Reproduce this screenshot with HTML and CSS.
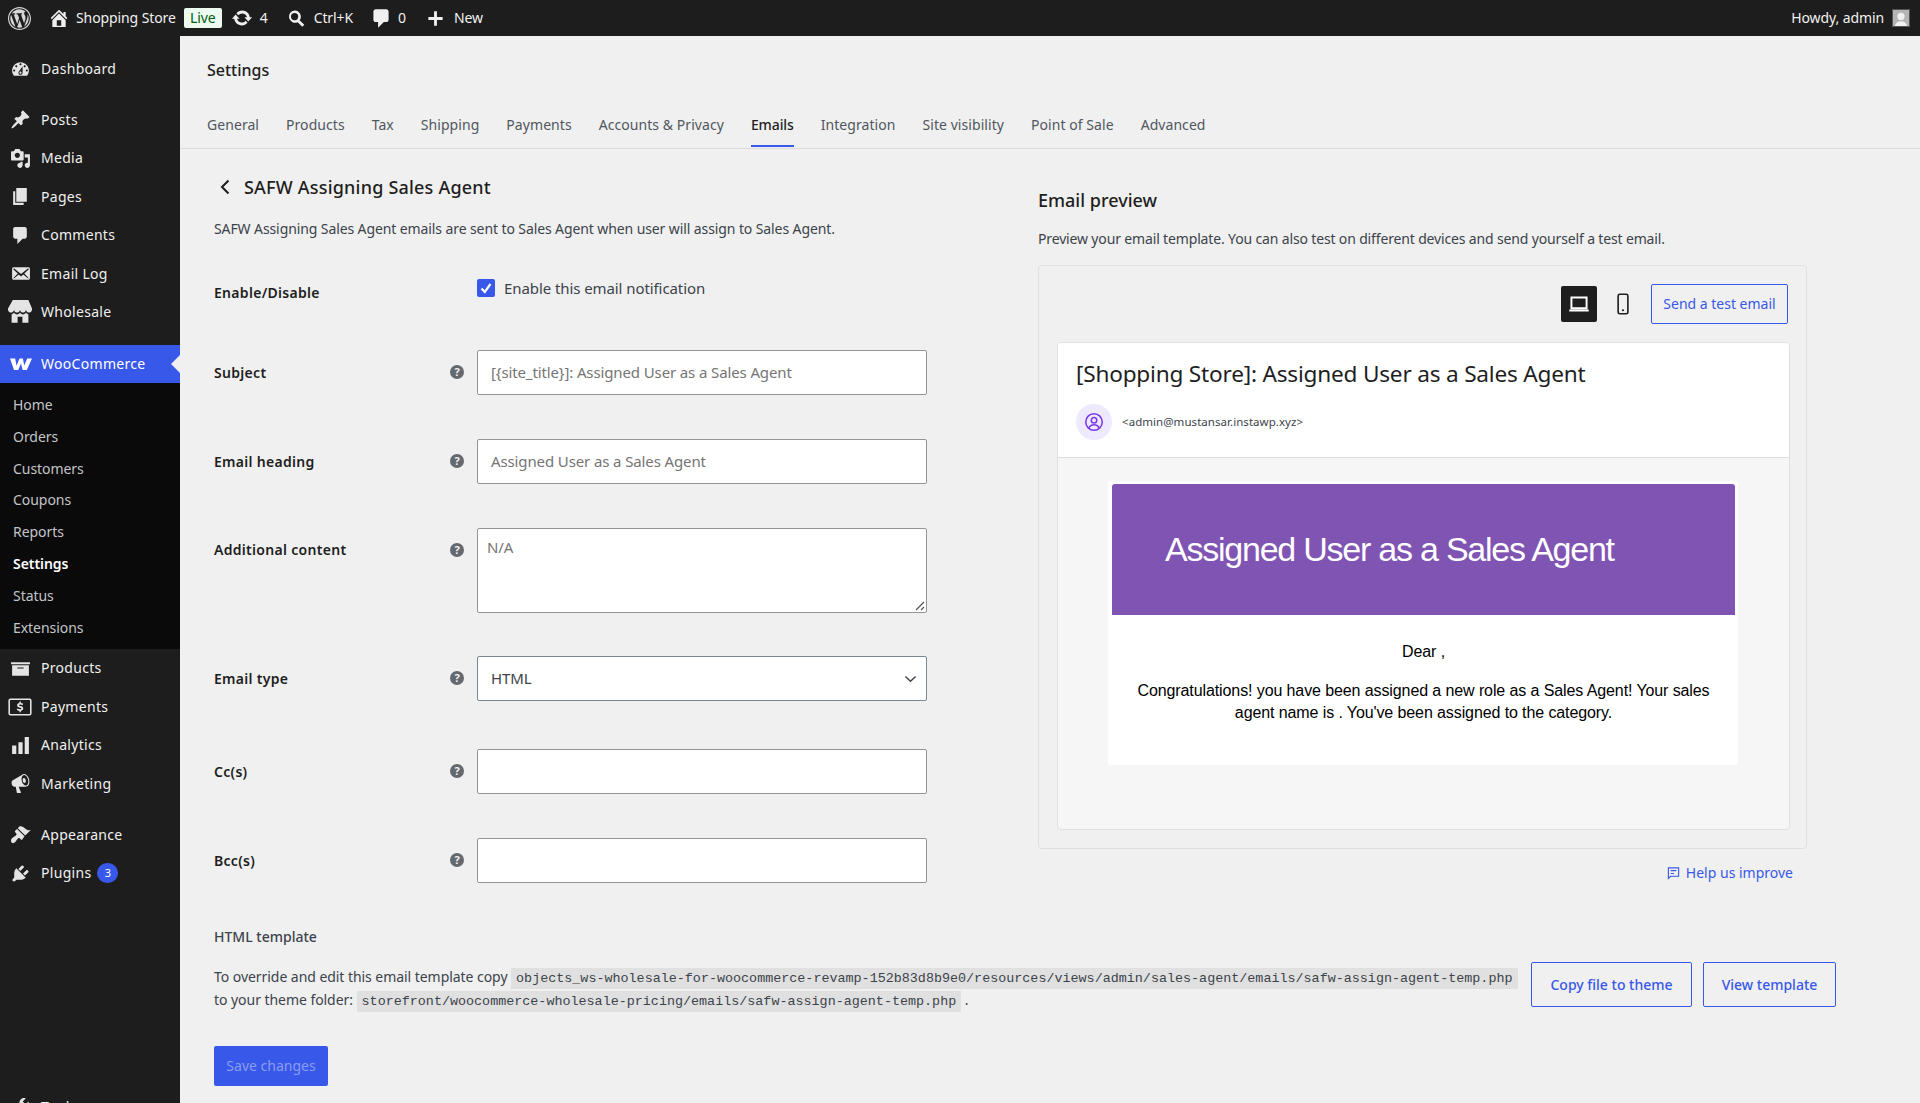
FILE: index.html
```html
<!DOCTYPE html>
<html lang="en">
<head>
<meta charset="utf-8">
<title>Settings</title>
<link rel="stylesheet" href="styles.css">
</head>
<body>
<header class="adminbar">
  <svg class="bar-logo" viewBox="0 0 20 20"><path d="M20 10c0-5.52-4.48-10-10-10S0 4.48 0 10s4.48 10 10 10 10-4.48 10-10zM10 1.01c4.96 0 8.99 4.03 8.99 8.99s-4.03 8.99-8.99 8.99S1.01 14.96 1.01 10 5.04 1.01 10 1.01zM8.01 14.82L4.96 6.61c.49-.03 1.05-.08 1.05-.08.43-.05.38-1.01-.06-.99 0 0-1.29.1-2.13.1-.15 0-.33 0-.52-.01 1.44-2.17 3.9-3.6 6.7-3.6 2.09 0 3.99.79 5.41 2.09-.6-.08-1.45.35-1.45 1.42 0 .66.38 1.22.79 1.88.31.54.5 1.22.5 2.21 0 1.34-1.27 4.48-1.27 4.48l-2.71-7.5c.48-.03.75-.16.75-.16.43-.05.38-1.1-.05-1.08 0 0-1.3.11-2.14.11-.78 0-2.11-.11-2.11-.11-.43-.02-.48 1.06-.05 1.08l.84.08 1.12 3.04zm6.02 2.15L16.64 10s.67-1.69.39-3.81c.63 1.14.94 2.42.94 3.81 0 2.96-1.56 5.58-3.94 6.97zM2.68 6.77L6.5 17.25c-2.67-1.3-4.47-4.08-4.47-7.25 0-1.16.2-2.23.65-3.23zm7.45 4.53l2.29 6.25c-.75.27-1.57.42-2.42.42-.72 0-1.41-.11-2.06-.3z"/></svg>
  <div class="bar-item bar-home">
    <svg class="bar-ic" viewBox="1 1 18 18"><path d="M16 8.5l1.53 1.53-1.06 1.06L10 4.62l-6.47 6.47-1.06-1.06L10 2.5l4 4v-2h2v4zm-6-2.46l6 5.99V18H4v-5.97zM12 17v-5H8v5h4z"/></svg>
    <span>Shopping Store</span>
    <span class="live">Live</span>
  </div>
  <div class="bar-item bar-updates">
    <svg class="bar-ic bar-ic-lg" viewBox="0 0 20 20"><path d="M10.2 3.28c3.53 0 6.43 2.61 6.92 6h2.08l-3.5 4-3.5-4h2.32c-.45-1.97-2.21-3.45-4.32-3.45-1.45 0-2.73.71-3.54 1.78L4.95 5.66C6.23 4.2 8.11 3.28 10.2 3.28zm-.4 13.44c-3.52 0-6.43-2.61-6.92-6H.8l3.5-4c1.17 1.33 2.33 2.67 3.5 4H5.48c.45 1.97 2.21 3.45 4.32 3.45 1.45 0 2.73-.71 3.54-1.78l1.71 1.95c-1.28 1.46-3.15 2.38-5.25 2.38z"/></svg>
    <span>4</span>
  </div>
  <div class="bar-item bar-search">
    <svg class="bar-ic" viewBox="0 0 20 20"><path d="M8 1.500a6.500 6.500 0 0 1 5.300 10.300l4.900 4.900-2.100 2.100-4.900-4.900A6.500 6.500 0 1 1 8 1.500zm0 2.700a3.800 3.800 0 1 0 0 7.600 3.800 3.800 0 0 0 0-7.600z"/></svg>
    <span>Ctrl+K</span>
  </div>
  <div class="bar-item bar-comments">
    <svg class="bar-ic" viewBox="2 1 15 18"><path d="M5 2h9c1.100 0 2 .9 2 2v7c0 1.100-.9 2-2 2h-2l-5 5v-5H5c-1.100 0-2-.9-2-2V4c0-1.100.9-2 2-2z"/></svg>
    <span>0</span>
  </div>
  <div class="bar-item bar-new">
    <svg class="bar-ic" viewBox="0 0 20 20"><path d="M17.500 8.300v3.400h-6v6H8.500v-6h-6V8.300h6v-6h3v6h6z"/></svg>
    <span>New</span>
  </div>
  <div class="bar-item bar-user">
    <span>Howdy, admin</span>
    <svg class="avatar" viewBox="0 0 20 20"><rect width="20" height="20" fill="#b4b4b4"/><circle cx="10" cy="8" r="4.500" fill="#f0f0f0"/><path d="M2.500 20c.5-4 3.500-6 7.500-6s7 2 7.500 6z" fill="#f0f0f0"/></svg>
  </div>
</header>

<div class="shell">
  <nav class="sidebar">
    <a class="menu-item first"><svg class="menu-ic" viewBox="0 0 20 20"><path d="M3.760 16h12.480c1.100-1.370 1.760-3.110 1.760-5 0-4.420-3.580-8-8-8s-8 3.580-8 8c0 1.890.66 3.630 1.760 5zM10 4c.55 0 1 .45 1 1s-.45 1-1 1-1-.45-1-1 .45-1 1-1zM6 6c.55 0 1 .45 1 1s-.45 1-1 1-1-.45-1-1 .45-1 1-1zm8 0c.55 0 1 .45 1 1s-.45 1-1 1-1-.45-1-1 .45-1 1-1zm-5.370 5.550L12 7v6c0 1.100-.9 2-2 2s-2-.9-2-2c0-.57.24-1.080.63-1.450zM4 10c.55 0 1 .45 1 1s-.45 1-1 1-1-.45-1-1 .45-1 1-1zm12 0c.55 0 1 .45 1 1s-.45 1-1 1-1-.45-1-1 .45-1 1-1zm-5 3c0-.55-.45-1-1-1s-1 .45-1 1 .45 1 1 1 1-.45 1-1z"/></svg>Dashboard</a>
    <div class="menu-sep short"></div>
    <a class="menu-item"><svg class="menu-ic" viewBox="0 0 20 20"><path d="M10.440 3.020l1.820-1.820 6.360 6.350-1.830 1.820c-1.050-.68-2.480-.57-3.410.36l-.75.75c-.92.93-1.040 2.350-.35 3.410l-1.830 1.820-2.410-2.410-2.800 2.790c-.42.42-3.380 2.710-3.800 2.290s1.860-3.390 2.280-3.810l2.790-2.790L4.100 9.360l1.830-1.820c1.050.69 2.480.57 3.400-.36l.75-.75c.93-.92 1.050-2.350.36-3.410z"/></svg>Posts</a>
    <a class="menu-item"><svg class="menu-ic" viewBox="0 0 20 20"><path d="M13 11V4c0-.55-.45-1-1-1h-1.670L9 1H5L3.670 3H2c-.55 0-1 .45-1 1v7c0 .55.45 1 1 1h10c.55 0 1-.45 1-1zM7 4.500c1.380 0 2.500 1.120 2.500 2.500S8.380 9.500 7 9.500 4.500 8.380 4.500 7 5.620 4.500 7 4.500zM14 6h5v10.500c0 1.380-1.120 2.500-2.500 2.500S14 17.880 14 16.500s1.120-2.500 2.500-2.500c.17 0 .34.02.5.05V9h-3V6zm-4 8.050V13h2v3.500c0 1.380-1.120 2.500-2.500 2.500S7 17.880 7 16.500 8.120 14 9.500 14c.17 0 .34.02.5.05z"/></svg>Media</a>
    <a class="menu-item"><svg class="menu-ic" viewBox="0 0 20 20"><path d="M6 15V2h10v13H6zm-1 1h8v2H3V5h2v11z"/></svg>Pages</a>
    <a class="menu-item"><svg class="menu-ic" viewBox="0 0 20 20"><path d="M5 2h9c1.100 0 2 .9 2 2v7c0 1.100-.9 2-2 2h-2l-5 5v-5H5c-1.100 0-2-.9-2-2V4c0-1.100.9-2 2-2z"/></svg>Comments</a>
    <a class="menu-item"><svg class="menu-ic" viewBox="0 0 20 20"><path d="M19 14.500v-9c0-.83-.67-1.500-1.500-1.500H3.490c-.83 0-1.500.67-1.500 1.500v9c0 .83.67 1.500 1.500 1.500H17.500c.83 0 1.500-.67 1.500-1.500zm-1.310-9.110c.33.33.15.67-.03.84L13.600 9.950l3.900 4.060c.12.14.2.36.06.51-.13.16-.43.15-.56.05l-4.370-3.730-2.140 1.950-2.130-1.950-4.370 3.730c-.13.1-.43.11-.56-.05-.14-.15-.06-.37.06-.51l3.900-4.060-4.060-3.720c-.18-.17-.36-.51-.03-.84s.67-.17.95.07l6.240 5.040 6.250-5.040c.28-.24.62-.4.95-.07z"/></svg>Email Log</a>
    <a class="menu-item"><svg class="menu-ic lg" viewBox="0 0 20 20"><path d="M1 10c.41.29.96.43 1.500.43.55 0 1.090-.14 1.500-.43.62-.46 1-1.170 1-2 0 .83.37 1.540 1 2 .41.29.96.43 1.500.43.55 0 1.090-.14 1.500-.43.62-.46 1-1.170 1-2 0 .83.37 1.540 1 2 .41.29.96.43 1.510.43.54 0 1.080-.14 1.490-.43.62-.46 1-1.170 1-2 0 .83.37 1.540 1 2 .41.29.96.43 1.500.43.55 0 1.090-.14 1.500-.43.63-.46 1-1.170 1-2V7l-3-7H4L0 7v1c0 .83.37 1.540 1 2zm2 8.990h5v-5h4v5h5v-7c-.37-.05-.72-.22-1-.43-.63-.45-1-.73-1-1.560 0 .83-.38 1.110-1 1.560-.41.3-.95.43-1.490.44-.55 0-1.100-.14-1.510-.44-.63-.45-1-.73-1-1.560 0 .83-.38 1.110-1 1.560-.41.3-.95.43-1.500.44-.54 0-1.090-.14-1.500-.44-.63-.45-1-.73-1-1.570 0 .84-.38 1.120-1 1.570-.29.21-.63.38-1 .44v6.990z"/></svg>Wholesale</a>
    <div class="menu-sep long"></div>
    <a class="menu-item active"><svg class="menu-ic woo" viewBox="0 0 24 14"><path d="M1 1.500h5.200l1.300 7.200L10.500 1.500h3.400l1.300 7 3-7H23l-5.200 11.500h-4.200L12 6.500 9.200 13H5z"/></svg>WooCommerce<span class="active-arrow"></span></a>
    <div class="submenu">
      <a>Home</a><a>Orders</a><a>Customers</a><a>Coupons</a><a>Reports</a><a class="current">Settings</a><a>Status</a><a>Extensions</a>
    </div>
    <a class="menu-item"><svg class="menu-ic" viewBox="0 0 20 20"><path d="M19 4v2H1V4h18zM2 7h16v10H2V7zm11 3V9H7v1h6z"/></svg>Products</a>
    <a class="menu-item"><svg class="menu-ic lg" viewBox="0 0 20 20"><rect x="1" y="3.500" width="18" height="13" rx="1" fill="none" stroke="currentColor" stroke-width="1.300"/><path d="M10.700 5.500v1.100c.8.1 1.400.3 1.900.6l-.5 1.300c-.6-.3-1.300-.5-2-.5-.6 0-.9.2-.9.500 0 .4.500.5 1.300.7 1.200.3 2.200.7 2.200 2 0 1.100-.8 1.800-2 2v1.200H9.500v-1.100c-.9-.1-1.700-.3-2.200-.7l.5-1.300c.7.4 1.500.6 2.300.6.600 0 1-.2 1-.6s-.5-.5-1.300-.7c-1.200-.3-2.200-.7-2.200-2 0-1.100.8-1.800 1.900-2V5.500z"/></svg>Payments</a>
    <a class="menu-item"><svg class="menu-ic" viewBox="0 0 20 20"><path d="M18 18V2h-4v16h4zm-6 0V7H8v11h4zm-6 0v-8H2v8h4z"/></svg>Analytics</a>
    <a class="menu-item"><svg class="menu-ic" viewBox="0 0 20 20"><path d="M18.150 5.940c.46 1.620.38 3.220-.02 4.480-.42 1.280-1.260 2.180-2.300 2.480-.16.06-.26.06-.4.06-.06.02-.12.02-.18.02-.06.02-.14.02-.22.02H8.230l2.220 5.500c.02.14-.06.26-.14.34-.08.1-.24.16-.34.16H6.950c-.1 0-.26-.06-.34-.16-.08-.08-.16-.2-.14-.34l-1-5.500H4.250l-.02-.02c-.5.06-1.080-.18-1.540-.62s-.88-1.080-1.060-1.880c-.24-.8-.2-1.560-.02-2.200.18-.62.58-1.080 1.060-1.300l.02-.02 9-5.400c.1-.06.18-.1.24-.16.06-.04.14-.08.24-.12.16-.08.28-.12.5-.18 1.040-.3 2.240.1 3.220.98s1.840 2.240 2.260 3.860zm-2.580 5.980h-.02c.4-.1.74-.34 1.040-.7.58-.7.86-1.760.86-3.040-.02-.64-.1-1.300-.28-1.980-.34-1.360-1.020-2.500-1.780-3.240s-1.680-1.100-2.460-.88c-.82.22-1.400.96-1.700 2-.32 1.040-.28 2.360.06 3.720.38 1.360 1 2.500 1.800 3.240.78.74 1.620 1.100 2.480.88zm-2.540-7.080c.22-.04.42-.02.62.04.38.16.76.48 1.020 1s.42 1.200.42 1.780c0 .3-.04.56-.12.8-.18.48-.44.84-.86.94-.34.1-.8-.06-1.140-.4s-.64-.86-.78-1.500c-.18-.62-.12-1.240.02-1.720s.48-.84.82-.94z"/></svg>Marketing</a>
    <div class="menu-sep"></div>
    <a class="menu-item"><svg class="menu-ic" viewBox="0 0 20 20"><path d="M14.480 11.060L7.410 3.990l1.500-1.500c.5-.56 2.300-.47 3.510.32 1.210.8 1.430 1.280 2.910 2.100 1.180.64 2.450 1.260 4.450.85zm-.71.71L6.700 4.700 4.930 6.470c-.39.39-.39 1.020 0 1.410l1.060 1.060c.39.39.39 1.030 0 1.420-.6.6-1.430 1.110-2.210 1.690-.35.26-.7.53-1.010.84C1.430 13.710 1 14.930 1 15.930c0 1.070.43 2.070 1.310 2.270 1 .24 2.150-.55 2.970-1.370.31-.31.58-.66.84-1.010.58-.78 1.090-1.610 1.690-2.210.39-.39 1.020-.39 1.410 0l1.060 1.060c.39.39 1.020.39 1.410 0z"/></svg>Appearance</a>
    <a class="menu-item"><svg class="menu-ic" viewBox="0 0 20 20"><path d="M13.110 4.360L9.870 7.600 8 5.730l3.240-3.240c.35-.34 1.050-.2 1.560.32.52.51.66 1.210.31 1.550zm-8 1.770l.91-1.120 9.010 9.010-1.190.84c-.71.71-2.630 1.160-3.820 1.160H6.140L4.900 17.260c-.59.59-1.540.59-2.120 0-.59-.58-.59-1.530 0-2.120l1.240-1.240v-3.880c0-1.130.4-3.190 1.090-3.890zm7.260 3.970l3.240-3.240c.34-.35 1.040-.21 1.550.31.52.51.66 1.210.31 1.550l-3.240 3.250z"/></svg>Plugins<span class="count">3</span></a>
    <a class="menu-item tools"><svg class="menu-ic" viewBox="0 0 20 20"><path d="M16.680 9.770c-1.340 1.340-3.300 1.670-4.950.99l-5.410 6.520c-.99.99-2.590.99-3.580 0s-.99-2.590 0-3.580l6.520-5.410c-.68-1.650-.35-3.610.99-4.950 1.280-1.280 3.120-1.620 4.720-1.060l-2.890 2.890 2.820 2.820 2.860-2.870c.53 1.580.18 3.390-1.080 4.650zM3.810 16.210c.4.39 1.040.39 1.430 0 .4-.4.4-1.040 0-1.430-.39-.4-1.030-.4-1.430 0-.39.39-.39 1.030 0 1.430z"/></svg>Tools</a>
  </nav>

  <main class="main">
    <div class="page-head">
      <h1 class="page-title">Settings</h1>
      <div class="tabs">
        <a>General</a><a>Products</a><a>Tax</a><a>Shipping</a><a>Payments</a><a>Accounts &amp; Privacy</a><a class="on">Emails</a><a>Integration</a><a>Site visibility</a><a>Point of Sale</a><a>Advanced</a>
      </div>
    </div>

    <div class="content">
      <div class="columns">
        <section class="col-form">
          <h2 class="email-title"><svg class="back" viewBox="0 0 12 18"><path d="M9.500 2.500L3 9l6.500 6.500" fill="none" stroke="currentColor" stroke-width="2"/></svg>SAFW Assigning Sales Agent</h2>
          <p class="email-desc">SAFW Assigning Sales Agent emails are sent to Sales Agent when user will assign to Sales Agent.</p>

          <div class="form">
            <div class="row row-check">
              <div class="label label-check">Enable/Disable</div>
              <div class="check-wrap"><span class="check"><svg viewBox="0 0 18 18"><path d="M4.500 9.500L7.800 13l5.700-8" fill="none" stroke="#fff" stroke-width="2.200"/></svg></span><span>Enable this email notification</span></div>
            </div>
            <div class="row">
              <div class="label">Subject<span class="help">?</span></div>
              <div class="field">[{site_title}]: Assigned User as a Sales Agent</div>
            </div>
            <div class="row">
              <div class="label">Email heading<span class="help">?</span></div>
              <div class="field">Assigned User as a Sales Agent</div>
            </div>
            <div class="row row-area">
              <div class="label">Additional content<span class="help">?</span></div>
              <div class="field area">N/A<svg class="grip" viewBox="0 0 10 10"><path d="M1 9l8-8M6 9l3-3" stroke="#555" stroke-width="1.200" fill="none"/></svg></div>
            </div>
            <div class="row row-select">
              <div class="label">Email type<span class="help">?</span></div>
              <div class="field select">HTML<svg class="caret" viewBox="0 0 14 8"><path d="M1.500 1.200L7 6.500l5.500-5.300" fill="none" stroke="#3c434a" stroke-width="1.500"/></svg></div>
            </div>
            <div class="row">
              <div class="label">Cc(s)<span class="help">?</span></div>
              <div class="field"></div>
            </div>
            <div class="row">
              <div class="label">Bcc(s)<span class="help">?</span></div>
              <div class="field"></div>
            </div>
          </div>
        </section>

        <section class="col-preview">
          <h2 class="preview-title">Email preview</h2>
          <p class="preview-desc">Preview your email template. You can also test on different devices and send yourself a test email.</p>
          <div class="preview-box">
            <div class="toolbar">
              <span class="device on"><svg viewBox="0 0 24 24"><path d="M5 6h14v10H5zM3 18h18" fill="none" stroke="#fff" stroke-width="1.800"/></svg></span>
              <span class="device phone"><svg viewBox="0 0 24 24"><rect x="7.500" y="3" width="9" height="18" rx="1.500" fill="none" stroke="#1e1e1e" stroke-width="1.500"/><circle cx="12" cy="17.800" r="1" fill="#1e1e1e"/></svg></span>
              <a class="btn-outline send">Send a test email</a>
            </div>
            <div class="mail">
              <div class="mail-head">
                <div class="mail-subject">[Shopping Store]: Assigned User as a Sales Agent</div>
                <div class="mail-from">
                  <span class="mail-avatar"><svg viewBox="0 0 24 24" fill="none" stroke="#7c3aed" stroke-width="1.700"><circle cx="12" cy="12" r="9"/><circle cx="12" cy="10" r="3"/><path d="M6.500 18.500c1-2.500 3-3.500 5.500-3.500s4.500 1 5.500 3.500"/></svg></span>
                  <span class="mail-addr">&lt;admin@mustansar.instawp.xyz&gt;</span>
                </div>
              </div>
              <div class="mail-canvas">
                <div class="mail-sheet">
                  <div class="mail-banner">Assigned User as a Sales Agent</div>
                  <div class="mail-body">
                    <p>Dear ,</p>
                    <p>Congratulations! you have been assigned a new role as a Sales Agent! Your sales agent name is . You've been assigned to the category.</p>
                  </div>
                </div>
              </div>
            </div>
          </div>
          <a class="improve"><svg viewBox="0 0 14 14"><path d="M1.500 1.500h11v9H4L1.500 12.800zM4 4.500h6M4 7.500h3.500" fill="none" stroke="currentColor" stroke-width="1.200"/></svg>Help us improve</a>
        </section>
      </div>

      <h3 class="tpl-title">HTML template</h3>
      <div class="tpl-row">
        <p class="tpl-text">To override and edit this email template copy <code>objects_ws-wholesale-for-woocommerce-revamp-152b83d8b9e0/resources/views/admin/sales-agent/emails/safw-assign-agent-temp.php</code> to your theme folder: <code>storefront/woocommerce-wholesale-pricing/emails/safw-assign-agent-temp.php</code> .</p>
        <a class="btn-outline tpl-btn">Copy file to theme</a>
        <a class="btn-outline tpl-btn view">View template</a>
      </div>
      <button class="save" type="button">Save changes</button>
    </div>
  </main>
</div>
</body>
</html>
```
FILE: styles.css
```css
* { box-sizing: border-box; }
html, body { margin: 0; height: 1103px; overflow: hidden; }
body {
  font-family: "Noto Sans", "Open Sans", sans-serif;
  font-size: 14px;
  line-height: 20px;
  color: #3c434a;
  background: #f0f0f0;
}
p, h1, h2, h3 { margin: 0; }

/* admin bar */
.adminbar {
  height: 36px;
  background: #1d1d1d;
  color: #f0f0f0;
  display: flex;
  align-items: center;
  padding-left: 8px;
  font-size: 14px;
  letter-spacing: -0.1px;
}
.bar-logo { width: 23px; height: 23px; fill: #d6d6d6; margin-right: 18px; }
.bar-item { display: flex; align-items: center; }
.bar-ic { width: 19px; height: 19px; fill: #f0f0f0; flex: none; }
.bar-ic-lg { width: 22px; height: 22px; }
.bar-home .bar-ic { width: 20px; height: 20px; margin-right: 7px; }
.live {
  margin-left: 8px;
  width: 38px;
  height: 20px;
  background: #edfaef;
  color: #005c12;
  border-radius: 2px;
  text-align: center;
  line-height: 20px;
}
.bar-updates { margin-left: 9px; gap: 7px; }
.bar-search { margin-left: 19px; gap: 8px; }
.bar-comments { margin-left: 19px; gap: 8px; }
.bar-comments .bar-ic { width: 18px; height: 21px; }
.bar-new { margin-left: 20px; gap: 9px; }
.bar-user { margin-left: auto; padding-right: 10px; gap: 8px; }
.avatar { width: 18px; height: 18px; border: 1px solid #555; }

/* shell */
.shell { display: flex; height: 1067px; }
.sidebar {
  width: 180px;
  flex: none;
  background: #1d1d1d;
  color: #f0f0f0;
  padding-top: 14px;
  overflow: hidden;
}
.menu-item {
  position: relative;
  display: flex;
  align-items: center;
  height: 38.5px;
  padding-left: 10px;
  letter-spacing: .3px;
}
.menu-ic { width: 21px; height: 21px; fill: currentColor; margin-right: 10px; flex: none; color: #e4e4e4; }
.menu-ic.lg { width: 24px; height: 24px; margin-left: -2px; margin-right: 9px; }
.menu-ic.woo { color: #fff; width: 24px; height: 14px; margin-left: -1px; margin-right: 8px; }
.menu-sep { height: 12.5px; }
.menu-sep.short { height: 12px; }
.menu-sep.long { height: 13px; }
.menu-item.tools { margin-top: 195px; }
.menu-item.active { background: #3858e9; color: #fff; }
.active-arrow {
  position: absolute;
  right: 0;
  top: 10px;
  border: 9px solid transparent;
  border-right-color: #f0f0f0;
  border-left-width: 0;
}
.submenu {
  background: #0a0a0a;
  color: #c3c4c7;
  padding: 6px 0 5.6px 13px;
  letter-spacing: -.05px;
}
.submenu a { display: block; height: 31.8px; line-height: 31.8px; }
.submenu .current { color: #fff; font-weight: 600; }
.count {
  margin-left: 6px;
  width: 21px;
  height: 20px;
  border-radius: 10px;
  background: #3858e9;
  color: #fff;
  font-size: 11px;
  text-align: center;
  line-height: 20px;
  letter-spacing: 0;
}

/* main */
.main { flex: 1; min-width: 0; }
.page-head {
  height: 113px;
  padding: 23px 0 0 27px;
  border-bottom: 1px solid #dcdcde;
}
.page-title { font-size: 16px; font-weight: 500; line-height: 22px; color: #1e1e1e; }
.tabs { display: flex; gap: 27px; margin-top: 25px; }
.tabs a { height: 41px; padding-top: 9px; color: #50575e; letter-spacing: .06px; white-space: nowrap; }
.tabs .on { color: #1e1e1e; font-weight: 500; border-bottom: 2px solid #3858e9; letter-spacing: -.1px; }

.content { padding-left: 34px; }
.columns { display: flex; }
.col-form { width: 824px; flex: none; padding-top: 26px; }
.email-title {
  display: flex;
  align-items: center;
  font-size: 18px;
  font-weight: 500;
  line-height: 24px;
  letter-spacing: .2px;
  color: #1e1e1e;
  height: 24px;
}
.back { width: 12px; height: 18px; margin: 0 13px 0 5px; }
.email-desc { margin-top: 20px; letter-spacing: -.1px; white-space: nowrap; }

.form { margin-top: 40px; display: flex; flex-direction: column; gap: 44px; }
.row { display: flex; }
.row-check { height: 27px; }
.row-area { margin-bottom: -1px; }
.row-select { margin-bottom: 4px; }
.label {
  width: 263px;
  flex: none;
  position: relative;
  font-weight: 600;
  color: #1e1e1e;
  line-height: 45px;
  letter-spacing: .3px;
}
.row-area .label { line-height: 44px; }
.label-check { line-height: 27px; }
.help {
  position: absolute;
  left: 236px;
  top: 15px;
  width: 14px;
  height: 14px;
  border-radius: 50%;
  background: #646970;
  color: #f0f0f0;
  font-size: 11px;
  font-weight: 700;
  line-height: 14px;
  text-align: center;
  letter-spacing: 0;
}
.check-wrap { display: flex; align-items: flex-start; gap: 9px; line-height: 18px; font-size: 15px; letter-spacing: -.08px; }
.check { width: 18px; height: 18px; background: #3858e9; border-radius: 2px; display: block; }
.check svg { display: block; }
.field {
  position: relative;
  width: 450px;
  height: 45px;
  background: #fff;
  border: 1px solid #949494;
  border-radius: 2px;
  padding-left: 13px;
  line-height: 43px;
  color: #757575;
  font-size: 15px;
  letter-spacing: -.12px;
}
.area { height: 85px; padding-left: 9px; line-height: 20px; padding-top: 8px; }
.grip { position: absolute; right: 1px; bottom: 1px; width: 10px; height: 10px; }
.select { border-color: #7a8794; color: #3c434a; }
.caret { position: absolute; right: 9px; top: 18px; width: 13px; height: 8px; }

/* preview */
.col-preview { width: 769px; flex: none; padding-top: 40px; }
.preview-title { font-size: 18px; font-weight: 500; line-height: 22px; color: #1e1e1e; }
.preview-desc { margin-top: 18px; white-space: nowrap; letter-spacing: -.15px; }
.preview-box {
  margin-top: 16px;
  height: 584px;
  border: 1px solid #e0e0e0;
  border-radius: 4px;
  padding: 18px 16px 18px 18px;
}
.toolbar { display: flex; justify-content: flex-end; align-items: center; height: 40px; margin-right: 2px; }
.device { width: 36px; height: 36px; display: flex; align-items: center; justify-content: center; border-radius: 2px; }
.device svg { width: 26px; height: 26px; display: block; }
.device.on { background: #1e1e1e; }
.device.phone { margin-left: 8px; }
.send { margin-left: 10px; width: 137px; height: 40px; }
.btn-outline {
  display: flex;
  align-items: center;
  justify-content: center;
  border: 1px solid #3858e9;
  border-radius: 2px;
  color: #3858e9;
  white-space: nowrap;
}
.mail {
  margin-top: 18px;
  height: 488px;
  border: 1px solid #e0e0e0;
  border-radius: 4px;
  background: #f6f6f6;
  overflow: hidden;
}
.mail-head { height: 115px; background: #fff; border-bottom: 1px solid #ddd; padding: 13px 0 0 18px; }
.mail-subject { font-size: 22.6px; line-height: 36px; color: #1e1e1e; white-space: nowrap; letter-spacing: -.2px; }
.mail-from { display: flex; align-items: center; margin-top: 12px; }
.mail-avatar { width: 36px; height: 36px; border-radius: 50%; background: #eee9fd; display: flex; align-items: center; justify-content: center; }
.mail-avatar svg { width: 22px; height: 22px; }
.mail-addr { margin-left: 10px; font-size: 11.5px; color: #3c434a; letter-spacing: .05px; }
.mail-canvas { padding: 23px 51px 0 50px; }
.mail-sheet { background: #fff; border-radius: 3px; height: 284px; padding: 3px 3px 0 4px; font-family: "Liberation Sans", Arial, sans-serif; color: #000; }
.mail-banner {
  height: 131px;
  background: #7f54b3;
  color: #fff;
  border-radius: 3px 3px 0 0;
  padding-left: 53px;
  font-size: 34px;
  line-height: 131px;
  font-weight: 400;
  letter-spacing: -1.23px;
  white-space: nowrap;
}
.mail-body { padding: 26px 24px 0 24px; text-align: center; font-size: 16px; line-height: 22px; letter-spacing: -.1px; }
.mail-body p { margin-bottom: 17px; }
.improve { display: flex; justify-content: flex-end; align-items: center; margin-top: 14px; padding-right: 14px; color: #3858e9; gap: 6px; }
.improve svg { width: 13px; height: 14px; }

/* template */
.tpl-title { margin-top: 44px; font-size: 14px; font-weight: 500; line-height: 20px; color: #3c434a; }
.tpl-row { display: flex; margin-top: 15px; }
.tpl-text { flex: 0 0 1317px; padding-top: 3px; line-height: 23px; letter-spacing: -.05px; height: 45px; }
code {
  font-family: "Liberation Mono", "DejaVu Sans Mono", monospace;
  font-size: 13.4px;
  line-height: 16px;
  letter-spacing: 0;
  background: #e0e0e0;
  padding: 3px 5px;
}
.tpl-btn { width: 161px; height: 45px; font-weight: 500; }
.tpl-btn.view { width: 133px; margin-left: 11px; }
.save {
  display: block;
  margin-top: 39px;
  width: 114px;
  height: 40px;
  border: 0;
  border-radius: 2px;
  background: #3858e9;
  color: #8a9cf2;
  font: inherit;
  padding: 0;
}
```
